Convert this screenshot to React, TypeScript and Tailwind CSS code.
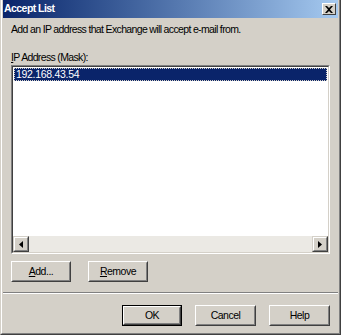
import React from "react";

const font = { fontFamily: '"Liberation Sans", Arial, sans-serif' };

function Btn({ children, w, isDefault }: { children: React.ReactNode; w: string; isDefault?: boolean }) {
  return (
    <div className={`${w} h-[21px] ${isDefault ? "border border-black" : ""} flex`}>
      <div className="flex-1 border border-t-white border-l-white border-r-[#404040] border-b-[#404040] flex">
        <div className="flex-1 border border-t-[#d4d0c8] border-l-[#d4d0c8] border-r-[#808080] border-b-[#808080] flex items-center justify-center text-[10.5px] tracking-[-0.5px] text-black">
          {children}
        </div>
      </div>
    </div>
  );
}

function Arrow({ dir }: { dir: "left" | "right" }) {
  return (
    <div className="w-[16px] h-[16px] bg-[#d4d0c8] border border-t-[#d4d0c8] border-l-[#d4d0c8] border-r-[#404040] border-b-[#404040] flex">
      <div className="flex-1 border border-t-white border-l-white border-r-[#808080] border-b-[#808080] flex items-center justify-center">
        <svg width="4" height="7" viewBox="0 0 4 7">
          {dir === "left" ? (
            <path d="M4 0 L0 3.5 L4 7 Z" fill="black" />
          ) : (
            <path d="M0 0 L4 3.5 L0 7 Z" fill="black" />
          )}
        </svg>
      </div>
    </div>
  );
}

export default function App() {
  return (
    <div
      className="w-[341px] h-[335px] bg-[#d4d0c8] border border-t-0 border-l-[#d4d0c8] border-r-[#404040] border-b-[#404040] flex flex-col"
      style={font}
    >
      <div className="flex-1 flex flex-col border border-t-0 border-l-white border-r-[#808080] border-b-[#808080] px-px">
        {/* title bar */}
        <div className="h-[18px] bg-gradient-to-r from-[#0a246a] to-[#a6caf0] flex items-center justify-between pl-[1px] pr-[2px]">
          <span className="text-white font-bold text-[10.5px] tracking-[-0.55px]">Accept List</span>
          <div className="w-[14px] h-[12px] bg-[#d4d0c8] border border-t-white border-l-white border-r-[#404040] border-b-[#404040] flex items-center justify-center">
            <svg width="8" height="7" viewBox="0 0 8 7">
              <path d="M0 0 L2 0 L4 2 L6 0 L8 0 L5 3.5 L8 7 L6 7 L4 5 L2 7 L0 7 L3 3.5 Z" fill="black" />
            </svg>
          </div>
        </div>

        <div className="flex-1 flex flex-col px-[8px] text-[10.5px] tracking-[-0.65px] text-black">
          <div className="mt-[5px] h-[13px] leading-[13px]">Add an IP address that Exchange will accept e-mail from.</div>
          <div className="mt-[15px] h-[13px] leading-[13px]">
            <span className="underline">I</span>P Address (Mask):
          </div>

          {/* list box */}
          <div className="mt-[1px] w-[319px] h-[189px] border border-t-[#808080] border-l-[#808080] border-r-white border-b-white flex">
            <div className="flex-1 flex flex-col border border-t-[#404040] border-l-[#404040] border-r-[#d4d0c8] border-b-[#d4d0c8] bg-white">
              <div className="flex-1 pt-px px-px">
                <div className="h-[13px] bg-[#0a246a] text-white leading-[13px] pl-[2px] tracking-[-0.3px] outline outline-1 outline-dotted outline-[#d4d0c8] -outline-offset-1">
                  192.168.43.54
                </div>
              </div>
              <div className="h-[16px] flex">
                <Arrow dir="left" />
                <div className="flex-1 bg-[#ebe9e4]" />
                <Arrow dir="right" />
              </div>
            </div>
          </div>

          <div className="mt-[7px] flex gap-[17px]">
            <Btn w="w-[60px]">
              <span>
                <span className="underline">A</span>dd...
              </span>
            </Btn>
            <Btn w="w-[60px]">
              <span>
                <span className="underline">R</span>emove
              </span>
            </Btn>
          </div>

          <div className="mt-[10px] -mx-[8px] border-t border-t-[#808080] border-b border-b-white" />

          <div className="mt-[11px] flex justify-end gap-[13px]">
            <Btn w="w-[60px]" isDefault>
              OK
            </Btn>
            <Btn w="w-[61px]">Cancel</Btn>
            <Btn w="w-[61px]">Help</Btn>
          </div>
        </div>
      </div>
    </div>
  );
}
